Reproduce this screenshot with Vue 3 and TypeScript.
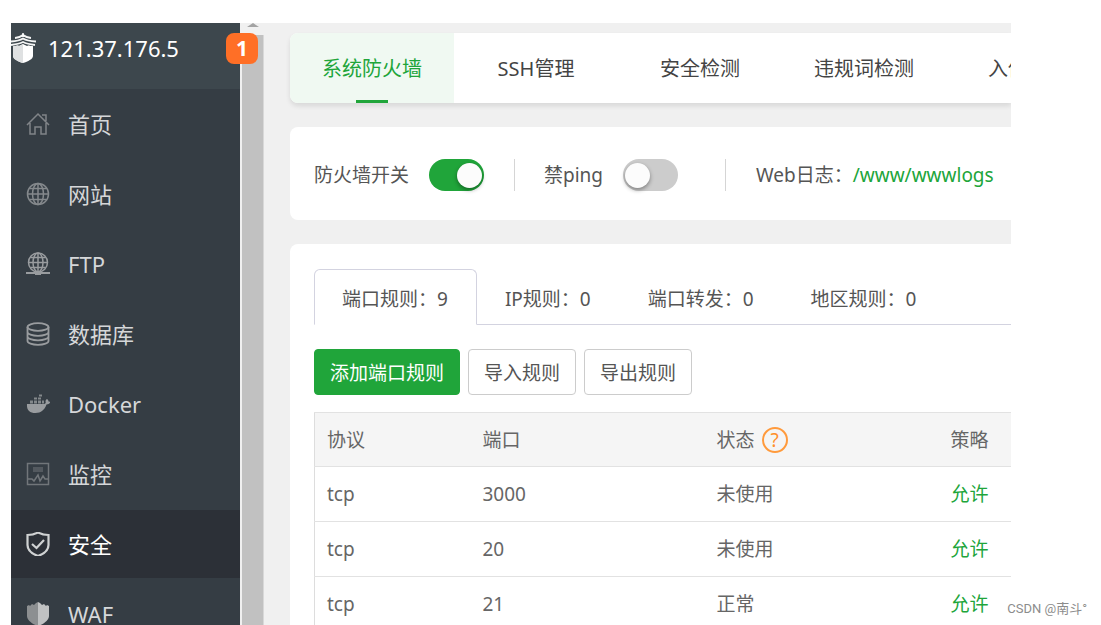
<script setup lang="ts">
import { ref } from 'vue'

interface NavItem {
  label: string
  icon: string
}

interface PortRule {
  protocol: string
  port: string
  status: string
  policy: string
}

const navItems: NavItem[] = [
  { label: '首页', icon: 'home' },
  { label: '网站', icon: 'globe' },
  { label: 'FTP', icon: 'ftp' },
  { label: '数据库', icon: 'database' },
  { label: 'Docker', icon: 'docker' },
  { label: '监控', icon: 'monitor' },
  { label: '安全', icon: 'shield' },
  { label: 'WAF', icon: 'waf' },
]
const activeNav = ref('安全')

const sections = ['系统防火墙', 'SSH管理', '安全检测', '违规词检测', '入侵防御']
const activeSection = ref(sections[0])

const ruleTabs = [
  { label: '端口规则', count: 9 },
  { label: 'IP规则', count: 0 },
  { label: '端口转发', count: 0 },
  { label: '地区规则', count: 0 },
]
const activeRuleTab = ref('端口规则')

const firewallOn = ref(true)
const pingBlocked = ref(false)

const rules: PortRule[] = [
  { protocol: 'tcp', port: '3000', status: '未使用', policy: '允许' },
  { protocol: 'tcp', port: '20', status: '未使用', policy: '允许' },
  { protocol: 'tcp', port: '21', status: '正常', policy: '允许' },
]
</script>

<template>
  <div class="page" lang="zh-CN">
    <div class="panel">
      <aside class="sidebar">
        <header class="server">
          <svg class="logo" viewBox="0 0 26 30" aria-hidden="true">
            <path d="M2 12l2 1 2-1 2 1 4-2 4 2 2-1 2 1 2-1v11c0 3-5 5.500-10 7C7 28.500 2 26 2 23z" fill="#fff" />
            <path d="M2 12l2 1 2-1 2 1 4-2v19C7 28.500 2 26 2 23z" fill="#dfe1e2" />
            <path d="M4 5Q9 4.500 12 2Q15 4.500 20 5M0 8.500Q8 8 12 5.500Q16 8 25 8.500M0 12Q8 11 12 9Q16 11 24 12" fill="none" stroke="#3d474d" stroke-width="3" />
            <path d="M4 5Q9 4.500 12 2Q15 4.500 20 5M0 8.500Q8 8 12 5.500Q16 8 25 8.500M0 12Q8 11 12 9Q16 11 24 12" fill="none" stroke="#f4f5f5" stroke-width="1.800" />
            <path d="M12 0v3" stroke="#fff" stroke-width="1.500" />
          </svg>
          <span>121.37.176.5</span>
          <span class="badge">1</span>
        </header>
        <nav class="nav">
          <a
            v-for="item in navItems"
            :key="item.label"
            href="#"
            class="nav-item"
            :class="{ active: item.label === activeNav }"
            @click.prevent="activeNav = item.label"
          >
            <svg class="nav-icon" viewBox="0 0 24 24" fill="none" stroke="currentColor" stroke-width="1.500" aria-hidden="true">
              <g v-if="item.icon === 'home'" opacity="0.75">
                <path d="M1 13L12 2l11 11M4 11v11h5v-7h6v7h5V11M16 3h4v6" />
              </g>
              <g v-else-if="item.icon === 'globe'" opacity="0.8">
                <circle cx="12" cy="12" r="10.500" />
                <ellipse cx="12" cy="12" rx="5.500" ry="10.500" />
                <path d="M12 1.500v21M1.500 12h21M3.500 6.500h17M3.500 17.500h17" />
              </g>
              <g v-else-if="item.icon === 'ftp'">
                <circle cx="12" cy="10.500" r="9.500" />
                <ellipse cx="12" cy="10.500" rx="5" ry="9.500" />
                <path d="M12 1v19M2.500 10.500h19M4.500 5.500h15M4.500 15.500h15" />
                <path d="M0 21h24" stroke-width="2" />
                <path d="M9 21h6" stroke-width="4" />
              </g>
              <g v-else-if="item.icon === 'database'" stroke-width="1.800">
                <ellipse cx="12" cy="5" rx="10.500" ry="3.800" />
                <path d="M1.500 5v14c0 2 4.500 3.800 10.500 3.800s10.500-1.800 10.500-3.800V5M1.500 10c0 2 4.500 3.800 10.500 3.800s10.500-1.800 10.500-3.800M1.500 14.500c0 2 4.500 3.800 10.500 3.800s10.500-1.800 10.500-3.800" />
              </g>
              <g v-else-if="item.icon === 'docker'" fill="currentColor" stroke="none">
                <path d="M1 12h17c1.500 0 2-1 1.500-2.500 0-1 .5-2 1.500-2.500 1 .8 1.500 1.500 1.500 2.500 1 0 1.500.3 1.800.8-.8 1.500-2 2-3.800 2.200C18.500 18 15 21 9.500 21 3.500 21 .5 18 1 12z" />
                <path d="M4 8.500h3v3H4zM8 8.500h3v3H8zM12 8.500h3v3h-3zM16 8.500h2v3h-2zM8 5.500h3v2H8zM12 5.500h3v2h-3zM13 2.500h3v2h-3z" opacity="0.8" />
              </g>
              <g v-else-if="item.icon === 'monitor'" opacity="0.6">
                <path d="M1.500 1.500h21v21h-21z" />
                <path d="M7 5h10v5H7z" fill="currentColor" stroke="none" opacity="0.5" />
                <path d="M2 17h4l2 2 4-6 2 6 3-5 2 3h3" />
              </g>
              <g v-else-if="item.icon === 'shield'" stroke-width="2.200">
                <path d="M12 0.500Q17 3 22.500 3v10c0 5-5 9-10.500 11C6.500 22 1.500 18 1.500 13V3Q7 3 12 .5z" />
                <path d="M6 12l4.500 4L18 8" />
              </g>
              <g v-else stroke="none">
                <path d="M12 0v24C6 22 1 18 1 14V4l2-1 1 1 2-2 2 1 2-2z" fill="#8c8f91" />
                <path d="M12 0v24c6-2 11-6 11-10V4l-2-1-1 1-2-2-2 1-2-2z" fill="#c0c2c3" />
              </g>
            </svg>
            <span>{{ item.label }}</span>
          </a>
        </nav>
      </aside>

      <div class="scroll-track" aria-hidden="true">
        <span class="scroll-arrow"></span>
        <span class="scroll-thumb"></span>
      </div>

      <main class="content">
        <nav class="sections">
          <button
            v-for="name in sections"
            :key="name"
            type="button"
            class="section"
            :class="{ active: name === activeSection }"
            @click="activeSection = name"
          >
            {{ name }}
          </button>
        </nav>

        <section class="card settings">
          <label class="setting">
            <span>防火墙开关</span>
            <input v-model="firewallOn" type="checkbox" class="switch" />
          </label>
          <label class="setting">
            <span>禁ping</span>
            <input v-model="pingBlocked" type="checkbox" class="switch" />
          </label>
          <p class="setting log">Web日志：<a href="#">/www/wwwlogs</a></p>
        </section>

        <section class="card rules">
          <div class="rule-tabs">
            <button
              v-for="tab in ruleTabs"
              :key="tab.label"
              type="button"
              class="rule-tab"
              :class="{ active: tab.label === activeRuleTab }"
              @click="activeRuleTab = tab.label"
            >
              {{ tab.label }}：{{ tab.count }}
            </button>
          </div>
          <div class="actions">
            <button type="button" class="btn primary">添加端口规则</button>
            <button type="button" class="btn">导入规则</button>
            <button type="button" class="btn">导出规则</button>
          </div>
          <table class="table">
            <colgroup>
              <col class="col-protocol" />
              <col class="col-port" />
              <col class="col-status" />
              <col />
            </colgroup>
            <thead>
              <tr>
                <th scope="col">协议</th>
                <th scope="col">端口</th>
                <th scope="col">
                  <span class="status-head">状态<a href="#" class="help">?</a></span>
                </th>
                <th scope="col">策略</th>
              </tr>
            </thead>
            <tbody>
              <tr v-for="rule in rules" :key="rule.port">
                <td>{{ rule.protocol }}</td>
                <td>{{ rule.port }}</td>
                <td>{{ rule.status }}</td>
                <td><a href="#">{{ rule.policy }}</a></td>
              </tr>
            </tbody>
          </table>
        </section>
      </main>
    </div>
    <span class="watermark">CSDN @南斗°</span>
  </div>
</template>

<style>
body {
  margin: 0;
  background: #fff;
}
</style>

<style scoped>
.page {
  position: relative;
  box-sizing: border-box;
  height: 100vh;
  padding: 23px 90px 0 11px;
  overflow: hidden;
  font-family: "Noto Sans", "Noto Sans CJK SC", sans-serif;
  font-size: 19px;
  line-height: 28px;
  color: #555;
}

.page *,
.page *::before,
.page *::after {
  box-sizing: border-box;
}

button {
  margin: 0;
  font: inherit;
  color: inherit;
  white-space: nowrap;
  cursor: pointer;
}

a {
  color: #20a53a;
  text-decoration: none;
}

.panel {
  display: flex;
  height: 100%;
  overflow: hidden;
  background: #f0f0f0;
}

.sidebar {
  flex: 0 0 229px;
  background: #353d44;
  font-size: 22px;
}

.server {
  position: relative;
  display: flex;
  align-items: center;
  gap: 11px;
  height: 66px;
  padding-bottom: 16px;
  background: #3d474d;
  color: #fff;
}

.logo {
  width: 26px;
  height: 30px;
}

.badge {
  position: absolute;
  top: 10px;
  right: -18px;
  z-index: 1;
  width: 32px;
  height: 31px;
  border-radius: 8px;
  background: #ff6f26;
  font-size: 21px;
  font-weight: 700;
  line-height: 30px;
  text-align: center;
}

.nav {
  display: flex;
  flex-direction: column;
  gap: 2px;
  padding-top: 1px;
}

.nav-item {
  display: flex;
  align-items: center;
  gap: 18px;
  height: 68px;
  padding-left: 15px;
  color: #d5d7d9;
}

.nav-icon {
  width: 24px;
  height: 24px;
  color: #999c9f;
}

.nav-item.active {
  background: #2c3037;
  color: #fff;
}

.nav-item.active .nav-icon {
  color: #d0d2d3;
}

.scroll-track {
  display: flex;
  flex-direction: column;
  align-items: center;
  flex: 0 0 24px;
  padding-left: 2px;
  overflow: hidden;
}

.scroll-arrow {
  height: 4px;
  margin-bottom: 8px;
  border: 6px solid transparent;
  border-top-width: 0;
  border-bottom: 4px solid #a3a3a3;
}

.scroll-thumb {
  flex: 1;
  width: 22px;
  background: #c1c1c1;
  border-right: 1px solid #d8d8d8;
}

.content {
  flex: 1;
  min-width: 0;
  padding: 10px 0 0 26px;
}

.sections {
  display: flex;
  height: 70px;
  overflow-x: clip;
  border-radius: 8px 0 0 8px;
  background: #fff;
  box-shadow: 0 3px 5px #0000001a;
  color: #444;
  font-size: 20px;
}

.section {
  position: relative;
  flex: 0 0 164px;
  padding: 2px 0 0;
  border: 0;
  background: none;
}

.section.active {
  border-radius: 8px 0 0 8px;
  background: #f0f9f2;
  color: #20a53a;
}

.section.active::after {
  content: "";
  position: absolute;
  bottom: 0;
  left: 50%;
  width: 32px;
  height: 3px;
  margin-left: -16px;
  background: #20a53a;
}

.card {
  margin-top: 24px;
  padding: 0 0 0 24px;
  border-radius: 8px 0 0 8px;
  background: #fff;
}

.settings {
  display: flex;
  align-items: center;
  height: 93px;
  padding-top: 2px;
  white-space: nowrap;
}

.setting {
  display: flex;
  align-items: center;
  gap: 20px;
  height: 32px;
  margin: 0;
}

.setting + .setting {
  margin-left: 30px;
  padding-left: 29px;
  border-left: 1px solid #d5d5d5;
}

.setting + .log {
  gap: 0;
  margin-left: 47px;
  padding-left: 30px;
}

.switch {
  appearance: none;
  width: 55px;
  height: 32px;
  margin: 0;
  padding: 4px 2px;
  border-radius: 16px;
  background: #ccc;
  cursor: pointer;
}

.switch::before {
  content: "";
  display: block;
  width: 25px;
  height: 25px;
  border-radius: 50%;
  background: #fcfcfc;
  box-shadow: 0 2px 4px #00000060;
}

.switch:checked {
  background: #20a53a;
}

.switch:checked::before {
  margin-left: auto;
}

.rules {
  padding-top: 25px;
}

.rule-tabs {
  display: flex;
  height: 56px;
  overflow: hidden;
  box-shadow: inset 0 -1px #d3d3e0;
}

.rule-tab {
  flex: none;
  padding: 3px 28px 0 27px;
  border: 1px solid transparent;
  background: none;
}

.rule-tab.active {
  border-color: #d3d3e0;
  border-bottom-color: #fff;
  border-radius: 6px 6px 0 0;
  background: #fff;
}

.actions {
  display: flex;
  gap: 8px;
  padding: 24px 0 17px;
}

.btn {
  height: 46px;
  padding: 1px 15px 0;
  border: 1px solid #ccc;
  border-radius: 4px;
  background: #fff;
}

.btn.primary {
  border-color: #20a53a;
  background: #20a53a;
  color: #fff;
}

.table {
  width: 100%;
  table-layout: fixed;
  border-collapse: collapse;
  border: 1px solid #ddd;
  border-right: 0;
  color: #666;
}

.col-protocol {
  width: 156px;
}

.col-port,
.col-status {
  width: 234px;
}

.table th,
.table td {
  height: 55px;
  padding: 0 0 0 12px;
  border-top: 1px solid #e2e2e2;
  font-weight: 400;
  text-align: left;
  white-space: nowrap;
}

.table th {
  height: 54px;
  background: #f5f5f5;
}

.status-head {
  display: flex;
  align-items: center;
  gap: 7px;
}

.help {
  width: 26px;
  height: 26px;
  border: 2px solid #ff9a3c;
  border-radius: 50%;
  color: #ff8f2b;
  line-height: 22px;
  text-align: center;
}

.watermark {
  position: absolute;
  right: 14px;
  bottom: 6px;
  font-family: Roboto, "Noto Sans CJK SC", sans-serif;
  font-size: 13px;
  line-height: 20px;
  color: #8c8c8c;
}
</style>
